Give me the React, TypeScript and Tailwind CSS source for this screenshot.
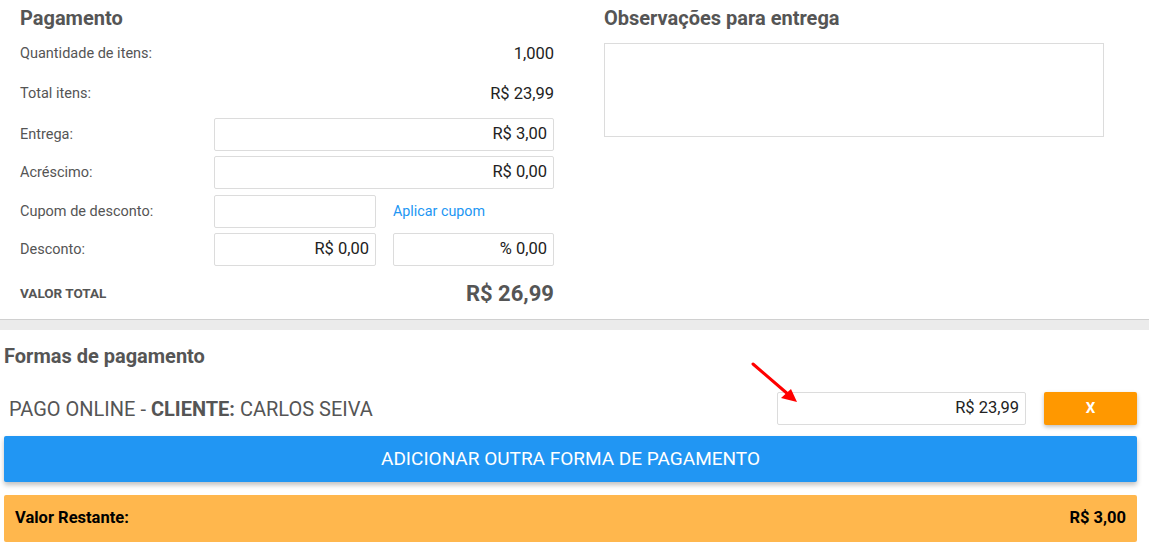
import React from "react"

function MoneyInput({ value, className = "" }: { value: string; className?: string }) {
  return (
    <div
      className={`h-[33px] border border-[#dcdcdc] rounded-[2px] bg-white flex items-center justify-end pr-[6px] text-[16.5px] text-[#222] ${className}`}
    >
      {value}
    </div>
  )
}

function Row({ label, children, className = "" }: { label: string; children: React.ReactNode; className?: string }) {
  return (
    <div className={`flex items-center ${className}`}>
      <div className="w-[194px] text-[14.5px] text-[#555]">{label}</div>
      <div className="flex-1 flex items-center">{children}</div>
    </div>
  )
}

export default function App() {
  return (
    <div className="w-[1149px] h-[549px] bg-white overflow-hidden font-['Roboto',sans-serif] relative">
      {/* Pagamento + Observações */}
      <div className="flex border-b border-[#d0d0d0] h-[320px]">
        <div className="ml-[20px] w-[534px] pt-[6px]">
          <h2 className="h-[24px] leading-[24px] text-[20px] font-bold text-[#555]">Pagamento</h2>

          <Row label="Quantidade de itens:" className="h-[40px] mt-[4px]">
            <div className="flex-1 text-right text-[16.5px] text-[#222]">1,000</div>
          </Row>
          <Row label="Total itens:" className="h-[40px]">
            <div className="flex-1 text-right text-[16.5px] text-[#222]">R$ 23,99</div>
          </Row>

          <Row label="Entrega:" className="mt-[4px]">
            <MoneyInput value="R$ 3,00" className="flex-1" />
          </Row>
          <Row label="Acréscimo:" className="mt-[5px]">
            <MoneyInput value="R$ 0,00" className="flex-1" />
          </Row>
          <Row label="Cupom de desconto:" className="mt-[6px]">
            <MoneyInput value="" className="w-[162px]" />
            <span className="ml-[17px] text-[14.3px] text-[#2196f3]">Aplicar cupom</span>
          </Row>
          <Row label="Desconto:" className="mt-[5px]">
            <MoneyInput value="R$ 0,00" className="w-[162px]" />
            <MoneyInput value="% 0,00" className="w-[161px] ml-[17px]" />
          </Row>

          <div className="flex items-center justify-between h-[34px] mt-[10px]">
            <span className="text-[13.5px] font-bold text-[#555]">VALOR TOTAL</span>
            <span className="text-[22px] font-bold text-[#555]">R$ 26,99</span>
          </div>
        </div>

        <div className="ml-[50px] w-[500px] pt-[6px]">
          <h2 className="h-[24px] leading-[24px] text-[20px] font-bold text-[#555]">Observações para entrega</h2>
          <div className="mt-[13px] h-[94px] border border-[#dcdcdc] bg-white"></div>
        </div>
      </div>

      <div className="h-[10px] bg-[#ebebeb]"></div>

      {/* Formas de pagamento */}
      <div className="pl-[4px] pr-[12px]">
        <h2 className="h-[24px] leading-[24px] mt-[14px] text-[20px] font-bold text-[#555]">Formas de pagamento</h2>

        <div className="flex items-center mt-[24px] h-[33px]">
          <div className="flex-1 pl-[5px] text-[20px] text-[#555]">
            PAGO ONLINE - <span className="font-bold">CLIENTE:</span> CARLOS SEIVA
          </div>
          <MoneyInput value="R$ 23,99" className="w-[249px] pr-[5px]" />
          <button className="ml-[18px] w-[93px] h-[33px] bg-[#ff9800] rounded-[2px] text-white font-bold text-[15px] shadow-[0_2px_4px_rgba(0,0,0,0.25)]">
            X
          </button>
        </div>

        <button className="mt-[11px] w-full h-[46px] bg-[#2196f3] rounded-[2px] text-white text-[19px] shadow-[0_3px_5px_rgba(0,0,0,0.25)]">
          ADICIONAR OUTRA FORMA DE PAGAMENTO
        </button>

        <div className="mt-[13px] h-[47px] bg-[#ffb74d] rounded-[2px] flex items-center justify-between px-[11px] text-[16.5px] font-bold text-black">
          <span>Valor Restante:</span>
          <span>R$ 3,00</span>
        </div>
      </div>

      {/* red annotation arrow */}
      <svg className="absolute left-[745px] top-[358px]" width="60" height="50" viewBox="0 0 60 50">
        <line x1="8" y1="6" x2="44" y2="37" stroke="#ff0000" strokeWidth="3" strokeLinecap="round" />
        <polygon points="52,44 36,40 46,31" fill="#ff0000" />
      </svg>
    </div>
  )
}
